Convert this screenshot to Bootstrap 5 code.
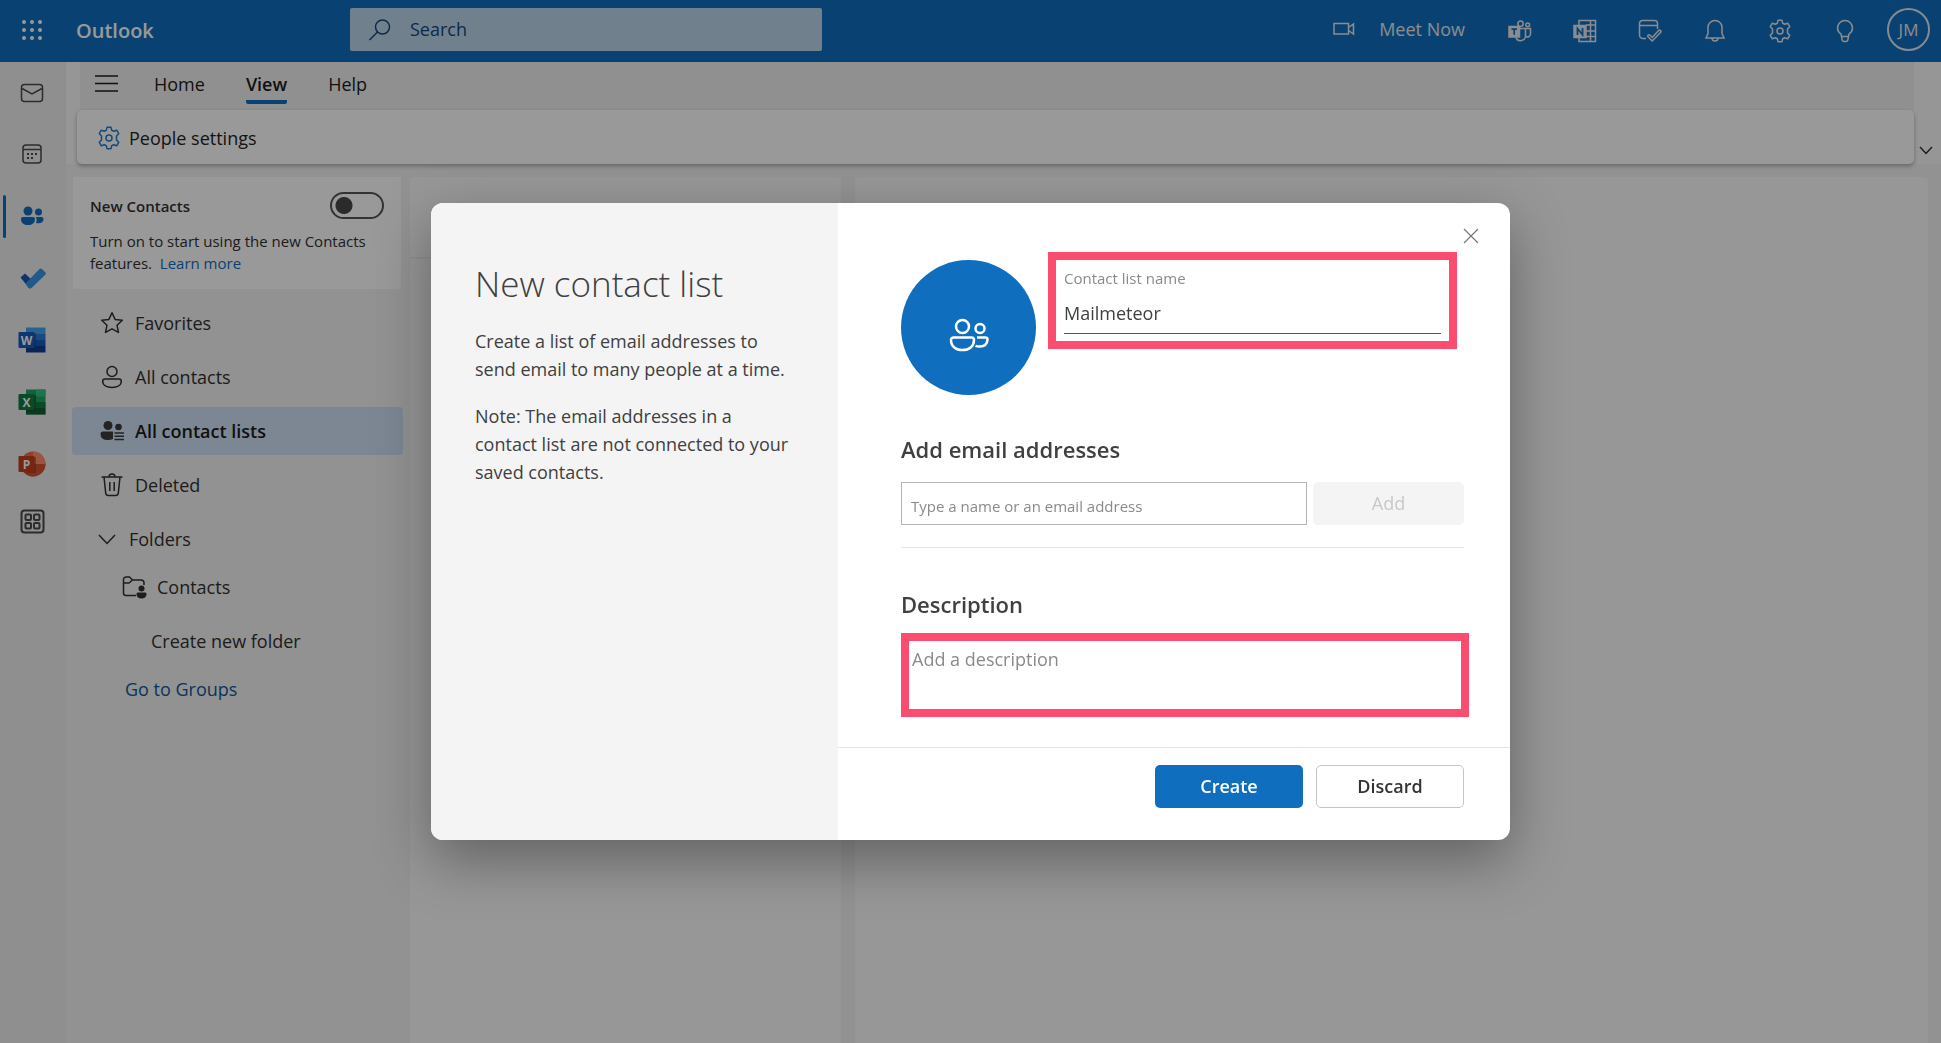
<!DOCTYPE html>
<html lang="en">
<head>
<meta charset="utf-8">
<meta name="viewport" content="width=device-width, initial-scale=1">
<title>Outlook – New contact list</title>
<link href="https://cdn.jsdelivr.net/npm/bootstrap@5.3.0/dist/css/bootstrap.min.css" rel="stylesheet">
<style>
  :root { --brand: #106ebe; --ink: #323130; --muted-ink: #8a8a8a; --accent-frame: #fb4d70; }
  body { font-family: "Open Sans", "Noto Sans", sans-serif; font-size: 18px; line-height: 28px; color: var(--ink); background: #f3f3f3; min-height: 100vh; }
  svg { display: block; fill: none; stroke: currentColor; stroke-width: 1.5; flex: none; }
  a { text-decoration: none; color: inherit; }
  .plain-btn { border: 0; background: none; padding: 0; color: inherit; }

  /* header */
  .app-header { background: var(--brand); height: 62px; color: #fff; padding-right: 11px; }
  .waffle { width: 64px; height: 60px; }
  .brand-name { font-size: 20px; font-weight: 600; width: 286px; padding-left: 12px; }
  .search-box { background: #bcd5ec; color: #14477e; width: 472px; height: 43px; border-radius: 2px; padding-left: 18px; margin-bottom: 3px; }
  .search-box input { border: 0; background: none; color: inherit; outline: 0; min-width: 0; padding-bottom: 3px; }
  .search-box input::placeholder { color: inherit; opacity: 1; }
  .header-icon { width: 65px; height: 60px; color: #e6eaef; }
  .meet-now { color: #e6eaef; gap: 23px; height: 28px; margin: 0 22px 4px 0; }
  .avatar { width: 43px; height: 43px; border: 2px solid #dfe7ef; border-radius: 50%; font-size: 17px; margin-left: 10px; margin-bottom: 3px; color: #e6eaef; }

  /* left rail */
  .rail { width: 66px; background: #efefef; }
  .rail a { height: 62px; width: 64px; color: #4a4a4a; }
  .rail a:first-child { height: 61px; }
  .rail a:last-child { height: 52px; }
  .rail .on { color: var(--brand); position: relative; }
  .rail .on::before { content: ""; position: absolute; left: 3px; top: 10px; width: 3px; height: 43px; border-radius: 2px; background: var(--brand); }

  /* ribbon */
  .ribbon { background: #fafafa; padding: 0 27px 0 11px; position: relative; height: 102px; }
  .ribbon-tabs { background: #f1f1f1; height: 48px; margin-left: 3px; color: #1b1b1b; padding: 0 0 6px 15px; }
  .ribbon-tabs a { border-bottom: 4px solid transparent; line-height: 32px; margin-right: 41px; }
  .ribbon-tabs .on { font-weight: 600; border-color: var(--brand); border-radius: 2px; }
  .menu-btn { margin-right: 36px; }
  .ribbon-bar { background: #fff; height: 54px; border-radius: 5px; box-shadow: 0 2px 4px rgba(0,0,0,.3); padding: 2px 0 0 20px; color: #242424; }
  .ribbon-fold { position: absolute; right: 8px; bottom: 9px; }

  /* contact navigation */
  main { padding-right: 13px; }
  main > * { margin-top: 13px; }
  .side-nav { width: 337px; padding-left: 6px; }
  .promo { background: #fff; margin: 0 2px 10px 1px; padding: 15px 17px 14px 17px; font-size: 15px; line-height: 22px; height: 112px; }
  .promo-head { margin-bottom: 11px; }
  .promo a { color: var(--brand); }
  .form-check-input.pill-switch { width: 54px; height: 27px; border: 2px solid #555; border-radius: 14px; margin: 0; background-color: transparent; background-image: radial-gradient(circle at 12px 50%, #484848 8px, transparent 9px); background-size: 100% 100%; background-position: 0 0; }
  .tree a { height: 48px; margin-bottom: 6px; border-radius: 4px; display: flex; align-items: center; padding-left: 28px; gap: 11px; }
  .tree .on { background: #cfe2f6; font-weight: 600; color: #1b1b1b; }
  .tree .folder-head { gap: 13px; padding-left: 26px; margin-bottom: 0; }
  .tree .folder-leaf { padding-left: 50px; gap: 10px; }
  .tree .folder-new { padding-left: 79px; margin-bottom: 0; }
  .tree .groups-link { padding-left: 53px; color: #10589b; }

  .list-pane { width: 431px; background: #fcfcfc; border-radius: 4px 4px 0 0; margin-left: 7px; }
  .list-pane .list-head { height: 82px; border-bottom: 2px solid #f0f0f0; }
  .detail-pane { background: #fcfcfc; border-radius: 4px 4px 0 0; margin-left: 14px; }

  /* dialog */
  .modal-backdrop.show { opacity: .4; }
  .modal-dialog { --bs-modal-width: 1079px; }
  .modal-content { border: 0; border-radius: 12px; overflow: hidden; color: #404040; }
  .dialog-shell { filter: drop-shadow(0 20px 28px rgba(0,0,0,.35)); }
  .intro { width: 407px; background: #f4f4f4; padding: 60px 45px 0 44px; }
  .intro h1 { font-size: 35px; font-weight: 300; line-height: 42px; margin-bottom: 22px; }
  .intro p { margin-bottom: 19px; }
  .form-area { padding: 49px 46px 30px 63px; }
  .close-btn { position: absolute; right: 31px; top: 25px; color: #777; }
  .close-btn svg { stroke-width: 1.2; }
  .group-disc { width: 135px; height: 135px; border-radius: 50%; background: var(--brand); margin-top: 8px; padding-top: 14px; color: #fff; }
  .framed { border: 8px solid var(--accent-frame); }
  .name-field { height: 97px; margin: 0 7px 0 12px; padding: 4px 8px 0; }
  .name-field label { font-size: 15px; color: var(--muted-ink); }
  .name-field input { border: 0; border-bottom: 1px solid #555; height: 42px; width: 100%; padding: 0; outline: 0; color: inherit; }
  .form-area h2 { font-size: 22px; font-weight: 600; line-height: 28px; margin: 40px 0 19px; }
  .add-row { height: 43px; gap: 6px; }
  .add-row input { border: 1px solid #b4b4b4; border-radius: 0; font-size: 15px; padding: 4px 9px 0; min-width: 0; outline: 0; }
  .add-row .btn, .actions .btn { border-radius: 5px; font-size: 18px; }
  .add-row .btn:disabled { width: 151px; background: #f4f4f4; border-color: #f4f4f4; color: #c8c8c8; opacity: 1; }
  .rule { border-top: 1px solid #e4e4e4; margin-top: 22px; }
  .form-area .desc-head { margin: 42px 0 15px; }
  .desc-field { width: calc(100% + 5px); height: 84px; padding: 4px 3px; resize: none; outline: 0; display: block; }
  ::placeholder { color: var(--muted-ink); opacity: 1; }
  .actions { border-top: 1px solid #e4e4e4; padding: 17px 46px 32px; gap: 13px; }
  .actions .btn { width: 148px; height: 43px; font-weight: 600; padding: 0; }
  .btn-create { background: var(--brand); color: #fff; }
  .btn-discard { background: #fff; border: 1px solid #c4c4c4; color: #333; }
</style>
</head>
<body class="d-flex flex-column">

<header class="app-header d-flex align-items-center">
  <button class="plain-btn waffle d-flex align-items-center justify-content-center" aria-label="App launcher">
    <svg width="22" height="22" viewBox="0 0 22 22" style="fill:currentColor;stroke:none"><circle cx="3" cy="2" r="2"/><circle cx="11" cy="2" r="2"/><circle cx="19" cy="2" r="2"/><circle cx="3" cy="10" r="2"/><circle cx="11" cy="10" r="2"/><circle cx="19" cy="10" r="2"/><circle cx="3" cy="18" r="2"/><circle cx="11" cy="18" r="2"/><circle cx="19" cy="18" r="2"/></svg>
  </button>
  <a href="#" class="brand-name">Outlook</a>
  <form class="search-box d-flex align-items-center" role="search">
    <svg width="24" height="24" viewBox="0 0 24 24"><circle cx="14.500" cy="9" r="7"/><path d="M9.500 14 1.500 22"/></svg>
    <input class="flex-grow-1 ms-3" type="search" placeholder="Search" aria-label="Search">
  </form>
  <div class="d-flex align-items-center ms-auto">
    <button class="plain-btn meet-now d-flex align-items-center">
      <svg width="24" height="16" viewBox="0 0 24 16"><path d="M2 2.500h14.500v10.500H2zM16.500 6.500l5-3.500v10l-5-3.500"/></svg>
      Meet Now
    </button>
    <button class="plain-btn header-icon d-flex align-items-center justify-content-center" aria-label="Teams">
      <svg width="24" height="24" viewBox="0 0 24 24"><circle cx="12.500" cy="4.800" r="2.700"/><circle cx="19.700" cy="5.800" r="1.900"/><path d="M12 9.500h5.500v7a5 5 0 0 1-9.500 2.300M18 9.500h4.500v5.500a3 3 0 0 1-4.500 2.500"/><path d="M1 7.500h10.500v10.500H1z" fill="currentColor"/><path d="M3.500 10.200h5.500M6.200 10.200v5.500" stroke="#106ebe" stroke-width="1.700"/></svg>
    </button>
    <button class="plain-btn header-icon d-flex align-items-center justify-content-center" aria-label="OneNote">
      <svg width="24" height="24" viewBox="0 0 24 24"><path d="M6 6V1.500h16.500v21H6V18M17.500 1.500v21M13 6h9.500M13 12h9.500M13 17.500h9.500"/><path d="M1 6.500h12v12H1z" fill="currentColor"/><path d="M4.500 16V9.500l5 6.200V9" stroke="#106ebe" stroke-width="1.800"/></svg>
    </button>
    <button class="plain-btn header-icon d-flex align-items-center justify-content-center" aria-label="My Day">
      <svg width="24" height="24" viewBox="0 0 24 24"><path d="M8 19.500H5A3.500 3.500 0 0 1 1.500 16V4.500a3 3 0 0 1 3-3h12a3 3 0 0 1 3 3V10M1.500 6.500h18"/><path d="M14.200 18.500 20.600 11.600a1.300 1.300 0 0 1 1.900 1.900L14.200 22l-4-4a1.300 1.300 0 0 1 1.900-1.800z"/></svg>
    </button>
    <button class="plain-btn header-icon d-flex align-items-center justify-content-center" aria-label="Notifications">
      <svg width="22" height="24" viewBox="0 0 22 24"><path d="M11 1.500a7 7 0 0 0-7 7v6l-2 4.500h18l-2-4.500v-6a7 7 0 0 0-7-7zM8 19a3 3 0 0 0 6 0"/></svg>
    </button>
    <button class="plain-btn header-icon d-flex align-items-center justify-content-center" aria-label="Settings">
      <svg width="24" height="24" viewBox="0 0 24 24"><circle cx="12" cy="12" r="3"/><path d="M10 1.300h4l.7 3 2 .9 3-1 2 3.500-2.200 2.300v4l2.200 2.300-2 3.500-3-1-2 .9-.7 3h-4l-.7-3-2-.9-3 1-2-3.500L4.500 14v-4L2.300 7.700l2-3.500 3 1 2-.9z" stroke-linejoin="round"/></svg>
    </button>
    <button class="plain-btn header-icon d-flex align-items-center justify-content-center" aria-label="Tips">
      <svg width="18" height="24" viewBox="0 0 18 24"><path d="M5.500 17.500 5 15C2.800 13.500 1.500 11.500 1.500 9a7.500 7.500 0 0 1 15 0c0 2.500-1.300 4.500-3.500 6l-.5 2.500zM5.500 17.500l.7 3.500q.3 1.500 1.800 1.500h2q1.500 0 1.800-1.500l.7-3.500"/></svg>
    </button>
    <button class="plain-btn avatar" aria-label="Account manager">JM</button>
  </div>
</header>

<div class="d-flex flex-grow-1">
  <nav class="rail d-flex flex-column" aria-label="Apps">
    <a href="#" class="d-flex align-items-center justify-content-center" aria-label="Mail"><svg width="24" height="20" viewBox="0 0 24 20"><rect x="1.500" y="1.500" width="21" height="17" rx="3"/><path d="m2 5.500 10 5.500 10-5.500"/></svg></a>
    <a href="#" class="d-flex align-items-center justify-content-center" aria-label="Calendar"><svg width="20" height="20" viewBox="0 0 20 20"><rect x="1" y="1" width="18" height="18" rx="3"/><path d="M1 5.500h18"/><path d="M5 10h2m2 0h2m2 0h2M5 14h2m2 0h2" stroke-width="2"/></svg></a>
    <a href="#" class="on d-flex align-items-center justify-content-center" aria-label="People"><svg width="24" height="20" viewBox="0 0 24 20" style="fill:currentColor;stroke:none"><circle cx="8" cy="5" r="4.500"/><circle cx="18.500" cy="6" r="3.500"/><path d="M3 11h10a2 2 0 0 1 2 2c0 4-3 6-7 6s-7-2-7-6a2 2 0 0 1 2-2zM16 11h6a2 2 0 0 1 1.500 2c0 3.500-3 5-7.500 4q1.500-3 0-6z"/></svg></a>
    <a href="#" class="d-flex align-items-center justify-content-center" aria-label="To Do"><svg width="27" height="21" viewBox="0 0 27 21" style="stroke:none"><path d="M1.500 9.500 6 5.500l8.500 8-4 7z" fill="#1c54b5"/><path d="m6.500 15.500 14-14.500q1.500-.8 2.500 0l3.500 3.500q.7 1 0 2L12.500 20q-1.500 1.200-3 0z" fill="#3a94e4"/></svg></a>
    <a href="#" class="d-flex align-items-center justify-content-center" aria-label="Word"><svg width="28" height="26" viewBox="0 0 28 26" style="stroke:none"><path d="M8 .5h19.500v7H8z" fill="#41a5ee"/><path d="M8 7h19.500v6H8z" fill="#2b7cd3"/><path d="M8 13h19.500v6H8z" fill="#185abd"/><path d="M8 19h19.500v6.500H8z" fill="#103f91"/><rect x="8" y="6" width="10" height="16" fill="#0d3a80" opacity=".5"/><rect x=".5" y="5" width="16" height="16" rx="1" fill="#185abd"/><text x="8.500" y="17.500" text-anchor="middle" font-size="12" font-weight="700" fill="#fff">W</text></svg></a>
    <a href="#" class="d-flex align-items-center justify-content-center" aria-label="Excel"><svg width="28" height="26" viewBox="0 0 28 26" style="stroke:none"><path d="M8 .5h19.500v25H8z" fill="#21a366"/><path d="M18 .5h9.500v7H18z" fill="#33c481"/><path d="M8 7h10v12H8z" fill="#107c41"/><path d="M8 19h19.500v6.500H8z" fill="#185c37"/><path d="M18 13h9.500v6H18z" fill="#107c41"/><rect x="8" y="6" width="10" height="16" fill="#0b4a28" opacity=".5"/><rect x=".5" y="5" width="16" height="16" rx="1" fill="#107c41"/><text x="8.500" y="17.500" text-anchor="middle" font-size="12" font-weight="700" fill="#fff">X</text></svg></a>
    <a href="#" class="d-flex align-items-center justify-content-center" aria-label="PowerPoint"><svg width="28" height="26" viewBox="0 0 28 26" style="stroke:none"><circle cx="15" cy="13" r="12.500" fill="#ed6c47"/><path d="M15 .5A12.500 12.500 0 0 1 27.500 13H15z" fill="#ff8f6b"/><path d="M2.500 13h25a12.500 12.500 0 0 1-25 0z" fill="#d35230"/><rect x="8" y="6" width="10" height="16" fill="#8f2f17" opacity=".5"/><rect x=".5" y="5" width="16" height="16" rx="1" fill="#c43e1c"/><text x="8.500" y="17.500" text-anchor="middle" font-size="12" font-weight="700" fill="#fff">P</text></svg></a>
    <a href="#" class="d-flex align-items-center justify-content-center" aria-label="More apps"><svg width="25" height="25" viewBox="0 0 25 25" style="stroke-width:2"><rect x="1.500" y="1.500" width="22" height="22" rx="3"/><rect x="5.500" y="5.500" width="5.500" height="5.500" rx="1"/><rect x="14" y="5.500" width="5.500" height="5.500" rx="1"/><rect x="5.500" y="14" width="5.500" height="5.500" rx="1"/><rect x="14" y="14" width="5.500" height="5.500" rx="1"/></svg></a>
  </nav>

  <div class="d-flex flex-column flex-grow-1">
    <div class="ribbon">
      <nav class="ribbon-tabs d-flex align-items-end" aria-label="Ribbon tabs">
        <button class="plain-btn menu-btn align-self-center" aria-label="Navigation pane"><svg width="23" height="18" viewBox="0 0 23 18"><path d="M0 2h23M0 9.500h23M0 17h23"/></svg></button>
        <a href="#">Home</a>
        <a href="#" class="on" aria-current="page">View</a>
        <a href="#">Help</a>
      </nav>
      <div class="ribbon-bar d-flex align-items-center">
        <button class="plain-btn d-flex align-items-center gap-2">
          <svg width="24" height="24" viewBox="0 0 24 24" style="color:#2a7cc7"><circle cx="12" cy="12" r="3"/><path d="M10 1.300h4l.7 3 2 .9 3-1 2 3.500-2.200 2.300v4l2.200 2.300-2 3.500-3-1-2 .9-.7 3h-4l-.7-3-2-.9-3 1-2-3.500L4.500 14v-4L2.300 7.700l2-3.500 3 1 2-.9z" stroke-linejoin="round"/></svg>
          People settings
        </button>
      </div>
      <button class="plain-btn ribbon-fold" aria-label="Ribbon display options"><svg width="14" height="9" viewBox="0 0 14 9"><path d="m1 1 6 6.500L13 1"/></svg></button>
    </div>

    <main class="d-flex flex-grow-1">
      <aside class="side-nav">
        <section class="promo">
          <div class="promo-head d-flex justify-content-between align-items-center">
            <label class="fw-semibold" for="newContacts">New Contacts</label>
            <span class="form-switch p-0 d-flex"><input class="form-check-input pill-switch" type="checkbox" role="switch" id="newContacts"></span>
          </div>
          <span>Turn on to start using the new Contacts</span> <span>features.</span>&nbsp; <a href="#">Learn more</a>
        </section>
        <nav class="tree" aria-label="Contacts">
          <a href="#"><svg width="24" height="24" viewBox="0 0 24 24"><path d="m12 1.800 3.100 6.600 7.200.9-5.300 4.900 1.500 7.200-6.500-3.600-6.500 3.600L7 14.200 1.700 9.300l7.200-.9z" stroke-linejoin="round"/></svg>Favorites</a>
          <a href="#"><svg width="24" height="24" viewBox="0 0 24 24"><circle cx="12" cy="6.500" r="5"/><path d="M5 14h14a2.300 2.300 0 0 1 2.300 2.300C21.300 20.500 17 22.500 12 22.500s-9.300-2-9.300-6.200A2.300 2.300 0 0 1 5 14z"/></svg>All contacts</a>
          <a href="#" class="on" aria-current="true"><svg width="24" height="24" viewBox="0 0 24 24" style="color:#3b3b3b"><g fill="currentColor" stroke="none"><circle cx="8" cy="6.500" r="4.500"/><circle cx="18.500" cy="8" r="3.300"/><path d="M3 12.500h10V20q-2 1-5 1-7.500 0-7.500-6a2.500 2.500 0 0 1 2.500-2.500z"/></g><path d="M14.500 14H24M14.500 17.300H24M14.500 20.600H24"/></svg>All contact lists</a>
          <a href="#"><svg width="24" height="24" viewBox="0 0 24 24"><path d="M1.500 4h21M9 4a3 3 0 0 1 6 0M4 4l1.700 16.200q.3 2.300 2.500 2.300h7.600q2.200 0 2.500-2.300L20 4M9.800 9v9M14.200 9v9"/></svg>Deleted</a>
          <a href="#" class="folder-head"><svg width="18" height="11" viewBox="0 0 18 11"><path d="m1 1 8 8.500L17 1"/></svg>Folders</a>
          <a href="#" class="folder-leaf"><svg width="25" height="24" viewBox="0 0 25 24"><path d="M14 20.500H4A2.500 2.500 0 0 1 1.500 18V4.500A2.500 2.500 0 0 1 4 2h3.500L10.500 5H19a3 3 0 0 1 3 3v2M1.500 8H7l3.500-3"/><g fill="currentColor" stroke="none"><circle cx="19.500" cy="13.500" r="3"/><path d="M16 17.500h7q2 0 1.500 2-.5 4-5 4t-5-4q-.3-2 1.500-2z"/></g></svg>Contacts</a>
          <a href="#" class="folder-new">Create new folder</a>
          <a href="#" class="groups-link">Go to Groups</a>
        </nav>
      </aside>
      <section class="list-pane" aria-label="Contact lists"><div class="list-head"></div></section>
      <section class="detail-pane flex-grow-1" aria-label="Details"></section>
    </main>
  </div>
</div>

<div class="modal-backdrop show"></div>
<div class="modal d-block" role="dialog" aria-modal="true" aria-labelledby="dialogTitle">
  <div class="modal-dialog modal-dialog-centered dialog-shell">
    <div class="modal-content flex-row">
      <section class="intro flex-shrink-0">
        <h1 id="dialogTitle">New contact list</h1>
        <p>Create a list of email addresses to send email to many people at a time.</p>
        <p>Note: The email addresses in a contact list are not connected to your saved contacts.</p>
      </section>
      <form class="flex-grow-1 position-relative">
        <button type="button" class="plain-btn close-btn" aria-label="Close"><svg width="16" height="16" viewBox="0 0 16 16"><path d="m1 1 14 14M15 1 1 15"/></svg></button>
        <div class="form-area">
          <div class="d-flex align-items-start">
            <div class="group-disc d-flex align-items-center justify-content-center flex-shrink-0">
              <svg width="40" height="34" viewBox="0 0 40 34" style="stroke-width:2.500"><circle cx="13.500" cy="8.500" r="6.500"/><circle cx="31" cy="10.500" r="4.500"/><path d="M4.500 19.500h18a2.500 2.500 0 0 1 2.500 2.500c0 6.500-5 10-11.500 10S2 28.500 2 22a2.500 2.500 0 0 1 2.500-2.500zM28 19.500h8.500a2 2 0 0 1 2 2q-.3 7-8 7-2.500 0-4-.7"/></svg>
            </div>
            <div class="framed name-field flex-grow-1">
              <label class="d-block" for="listName">Contact list name</label>
              <input id="listName" type="text" value="Mailmeteor">
            </div>
          </div>
          <h2><label for="emailInput">Add email addresses</label></h2>
          <div class="add-row d-flex">
            <input class="flex-grow-1" id="emailInput" type="text" placeholder="Type a name or an email address">
            <button type="button" class="btn p-0" disabled>Add</button>
          </div>
          <div class="rule"></div>
          <h2 class="desc-head"><label for="descInput">Description</label></h2>
          <textarea class="framed desc-field" id="descInput" placeholder="Add a description"></textarea>
        </div>
        <div class="actions d-flex justify-content-end">
          <button type="button" class="btn btn-create">Create</button>
          <button type="button" class="btn btn-discard">Discard</button>
        </div>
      </form>
    </div>
  </div>
</div>
<script src="https://cdn.jsdelivr.net/npm/bootstrap@5.3.0/dist/js/bootstrap.bundle.min.js"></script>
</body>
</html>
